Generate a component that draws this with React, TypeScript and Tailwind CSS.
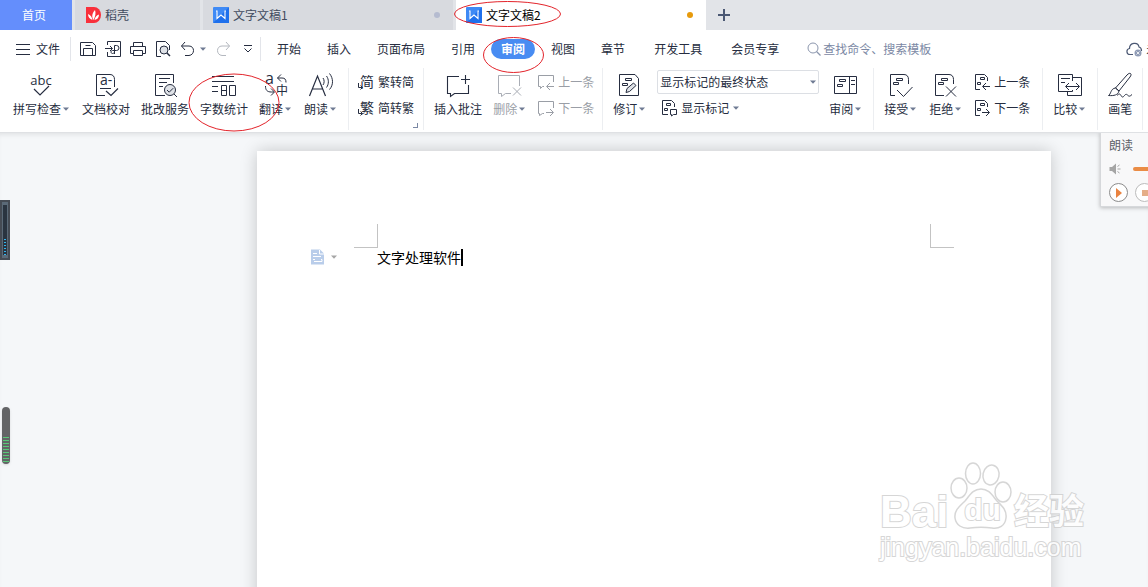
import { useState, type ReactNode } from "react";
import clsx from "clsx";

const labelClass = "flex h-4 items-center whitespace-nowrap text-xs leading-4";

function Svg({ size = 24, children, className }: { size?: number; children: ReactNode; className?: string }) {
  return (
    <svg
      width={size}
      height={size}
      viewBox={`0 0 ${size} ${size}`}
      fill="none"
      stroke="currentColor"
      className={clsx("shrink-0 overflow-visible", className)}
      aria-hidden="true"
    >
      {children}
    </svg>
  );
}

function Caret({ className = "text-[#6f7b93]" }: { className?: string }) {
  return (
    <svg width="6" height="4" viewBox="0 0 6 4" fill="currentColor" className={clsx("shrink-0", className)} aria-hidden="true">
      <path d="M0 .5h6L3 3.8z" />
    </svg>
  );
}

/* ---------- ribbon icons, 24px ---------- */

const spellIcon = (
  <Svg>
    <text x="11" y="12" textAnchor="middle" fontSize="13" fill="currentColor" stroke="none" className="font-['Open_Sans',sans-serif]">abc</text>
    <path d="M4 16l6 6L19 13" strokeWidth="1.2" />
  </Svg>
);

const proofIcon = (
  <Svg>
    <path d="M11 22.5H2.5V1.5H16c3 0 4.5 2 4.5 5V14M6 15.5h11" />
    <text x="6" y="12" fontSize="14" fill="currentColor" stroke="none" className="font-['Open_Sans',sans-serif]">a-</text>
    <path d="M12 18l5 4.5 7-7" strokeWidth="1.2" />
  </Svg>
);

const correctIcon = (
  <Svg>
    <path d="M12 22.5H2.5V1.5h18V10M6 5.5h11M6 9.5h8M6 13.5h4" />
    <circle cx="17" cy="17" r="5.5" fill="#dfe2e7" />
    <path d="M14 17l2.2 2.2 4-4M21 21l3 3" />
  </Svg>
);

const countIcon = (
  <Svg>
    <path d="M0 3.5h22M0 8.5h22M0 13.5h6M0 18.5h6M9.5 12.5h5v10h-5zM9.5 17.5h5M17.5 12.5h6v10h-6z" />
  </Svg>
);

const translateIcon = (
  <Svg>
    <text x="1" y="11" fontSize="16" fill="currentColor" stroke="none" className="font-['Open_Sans',sans-serif]">a</text>
    <text x="12" y="22" fontSize="12" fill="currentColor" stroke="none">中</text>
    <path d="M17 1.5L13.5 5l3.5 3.5M13.5 5H18c3 0 4 1.5 4 4.5M1.5 13c0 4 1.5 6 6 6H10M7 15.5l3.5 3.5L7 22.5" />
  </Svg>
);

const readIcon = (
  <Svg>
    <path d="M.5 23L8.5 3 16.5 23M3.5 16h10" strokeWidth="1.2" />
    <path d="M14 5c1.5 2 1.5 5 0 7M17.5 3c2.5 3.5 2.5 8 0 11.5M20.5.5c4 5 4 11.5 0 16" />
  </Svg>
);

const addCommentIcon = (
  <Svg>
    <path d="M13 3.5H1.5v17h3v3l4-3h14V12M19.5 2v9M15 6.5h9" strokeWidth="1.1" />
  </Svg>
);

const deleteCommentIcon = (
  <Svg>
    <path d="M13 20.5H7.5l-4 3v-3h-3v-18h21V13M15 14.5l8 8M23 14.5l-8 8" />
  </Svg>
);

const reviseIcon = (
  <Svg>
    <path d="M1.5 1.5H17l3.5 4v17h-19zM7.5 5.5h6v2h-6zM4.5 10.5h5v2h-5z" />
    <path d="M8 19.5l1-4 6.5-5.5 2.5 2.5-6.5 6z" fill="#dfe2e7" />
  </Svg>
);

const reviewPaneIcon = (
  <Svg>
    <path d="M.5 3.5h22v17H.5zM15.5 3.5v17M5.5 6.5h6v2h-6zM3.5 11.5h5v2h-5zM17 7.5h4M17 11.5h4" />
  </Svg>
);

const acceptIcon = (
  <Svg>
    <path d="M6 22.5H1.5v-21H15c3 0 4.5 2 4.5 5V11M7.5 5.5h6v2h-6zM4.5 9.5h5v2h-5z" />
    <path d="M8 17l6.5 6.5L23.5 14" />
  </Svg>
);

const rejectIcon = (
  <Svg>
    <path d="M10 22.5H1.5v-21H15c3 0 4.5 2 4.5 5V11M7.5 5.5h6v2h-6zM4.5 9.5h5v2h-5z" />
    <path d="M12 13.5l10 10M22 13.5l-10 10" />
  </Svg>
);

const compareIcon = (
  <Svg>
    <path d="M14.5 8V1.5H.5v17h14V17M14.5 4.5h9v18h-14v-4M3 5.5h9M3 9.5h4" />
    <path d="M8 13.5h13M11 10l-3.5 3.5L11 17M18 10l3.5 3.5L18 17" />
  </Svg>
);

const penIcon = (
  <Svg>
    <path d="M22.5.5c1 1 .5 2-.5 3.5L11 18l-3.5-3L19 2c1.5-1.5 2.5-2 3.5-1.5zM7.5 15L11 18c-1 4-5 5-10.5 4.5 2.5-1 2-7 7-7.500z" />
    <path d="M9 22.5c2-2 3-2 4 0s2 2 3.5 0 2.5-1 3.5 0 2 1 4-1" />
  </Svg>
);

/* ---------- ribbon icons, 16px ---------- */

function HanIcon({ char }: { char: string }) {
  return (
    <Svg size={16}>
      <text x="2" y="13" fontSize="14" fill="currentColor" stroke="none">{char}</text>
      <path d="M.5 9v4.5H4M2.5 11.5l2 2-2 2" />
    </Svg>
  );
}

const prevCommentIcon = (
  <Svg size={16}>
    <path d="M6 12.5H4.5l-2 2v-2h-2v-11h15V8M16 12.5H9M12 9l-3.5 3.5L12 16" />
  </Svg>
);

const nextCommentIcon = (
  <Svg size={16}>
    <path d="M6 13.5H4.5l-3 2v-2h-1v-12h15V8M8 12.5h7M12 9l3.5 3.5L12 16" />
  </Svg>
);

const markupIcon = (
  <Svg size={16}>
    <path d="M7 14.5H1.5V.5h9l3 3V7M5.5 3.5h4v2h-4zM3.5 8.5h3v2h-3zM9.5 9.5h6v5h-3l-2 1.5v-1.5h-1z" />
  </Svg>
);

const prevChangeIcon = (
  <Svg size={16}>
    <path d="M6 15.5H1.5V.5h9l3 3V7M6.5 3.5h4v2h-4zM3.5 8.5h3v2h-3zM16 12.5H9M12 9l-3.5 3.5L12 16" />
  </Svg>
);

const nextChangeIcon = (
  <Svg size={16}>
    <path d="M6 15.5H1.5V.5h9l3 3V7M6.5 3.5h4v2h-4zM3.5 8.5h3v2h-3zM8 12.5h7M12 9l3.5 3.5L12 16" />
  </Svg>
);

function WriterLogo() {
  return (
    <svg width="16" height="16" viewBox="0 0 16 16" className="shrink-0" aria-hidden="true">
      <rect width="16" height="16" rx="1" fill="#3f8af5" />
      <path d="M16 0v16H0z" fill="#1f70ec" />
      <path d="M3 4h1v7.500l4-3.500 4 3.500V4h1" fill="none" stroke="#fff" strokeWidth="1.1" />
    </svg>
  );
}

function BigButton({ icon, label, caret, disabled }: { icon: ReactNode; label: string; caret?: boolean; disabled?: boolean }) {
  return (
    <button type="button" className="flex shrink-0 flex-col items-center gap-1 pt-[5px]">
      <span className={clsx("flex h-6 w-6", disabled && "text-[#a9adb5]")}>{icon}</span>
      <span className={clsx(labelClass, disabled && "text-[#9a9ea6]")}>
        {label}
        {caret ? (
          <span className="flex w-[10px] justify-center">
            <Caret />
          </span>
        ) : null}
      </span>
    </button>
  );
}

function SmallButton({ icon, label, caret, disabled }: { icon: ReactNode; label: string; caret?: boolean; disabled?: boolean }) {
  return (
    <button type="button" className={clsx(labelClass, "gap-1", disabled && "text-[#9a9ea6]")}>
      {icon}
      {label}
      {caret ? <Caret /> : null}
    </button>
  );
}

function Group({ children, className }: { children: ReactNode; className?: string }) {
  return (
    <div className={clsx("relative mb-[2px] flex shrink-0 items-start border-r border-[#eceef1]", className ?? "gap-[11px] px-[10px]")}>
      {children}
    </div>
  );
}

function TabBar() {
  return (
    <div className="flex h-[30px] shrink-0 gap-[3px] overflow-hidden bg-[#e2e4e8] text-xs text-[#414b5e]">
      <button type="button" className="w-[72px] shrink-0 bg-[#648efc] pr-1 text-white">首页</button>
      <button type="button" className="flex w-[125px] shrink-0 items-center gap-1 bg-[#d8dadf] pl-[11px]">
        <svg width="15" height="16" viewBox="0 0 15 16" aria-hidden="true">
          <path d="M0 0h8a7 8 0 010 16H0z" fill="#f9303b" />
          <path d="M7.5 13C5.5 10 6 6 9 3c1 3 .5 6-1.5 10zM6.5 13C3.5 12 2 10 2 7c2.5 1 4 3 4.500 6zM8.500 13c.5-3 2-4.500 4.500-5.500 0 3-1.500 5-4.500 5.500z" fill="#fff" />
        </svg>
        稻壳
      </button>
      <button type="button" className="flex w-[250px] shrink-0 items-center gap-1 bg-[#d8dadf] pl-[10px] pr-[13px]">
        <WriterLogo />
        文字文稿1
        <span className="ml-auto h-[6px] w-[6px] rounded-full bg-[#b5bbd0]" />
      </button>
      <button type="button" className="flex w-[250px] shrink-0 items-center gap-1 bg-white pl-[10px] pr-[13px] text-black">
        <WriterLogo />
        文字文稿2
        <span className="ml-auto h-[6px] w-[6px] rounded-full bg-[#e79a0c]" />
      </button>
      <button type="button" aria-label="新建" className="shrink-0 pl-[9px] text-[#4b5873]">
        <Svg size={12}>
          <path d="M6 0v12M0 6h12" strokeWidth="2" />
        </Svg>
      </button>
    </div>
  );
}

const menus = ["开始", "插入", "页面布局", "引用", "审阅", "视图", "章节"];
const extraMenus = ["开发工具", "会员专享"];

function MenuBar() {
  const [active, setActive] = useState("审阅");

  function renderMenu(name: string) {
    return (
      <button
        key={name}
        type="button"
        onClick={() => setActive(name)}
        className={clsx(
          "h-[20px] whitespace-nowrap rounded-full px-[10px]",
          name === active && "bg-[#488cf2] font-bold text-white",
        )}
      >
        {name}
      </button>
    );
  }

  return (
    <div className="flex h-[38px] shrink-0 items-center overflow-hidden bg-white text-xs">
      <button type="button" className="ml-4 flex shrink-0 items-center gap-[6px]">
        <Svg size={14}>
          <path d="M0 2.5h14M0 7.5h14M0 12.5h14" />
        </Svg>
        文件
      </button>
      <div className="ml-[10px] flex h-6 shrink-0 items-center gap-[9px] border-x border-[#e3e5ea] pl-[9px] pr-[6px]">
        <button type="button" aria-label="保存">
          <Svg size={16}>
            <path d="M.5 1.5h12l3 3v10H.5zM3.5 14.5v-7h9v7M5.5 4.5h5" />
          </Svg>
        </button>
        <button type="button" aria-label="输出为PDF">
          <Svg size={16}>
            <path d="M2.5 4V.5h13v15h-13V11M0 7.5h7M5 5l2.5 2.5L5 10M9.5 13V4.5h2a2 2 0 010 5H7.5c-2 0-2 3 0 3s2-1.5 2-3" />
          </Svg>
        </button>
        <button type="button" aria-label="打印">
          <Svg size={16}>
            <path d="M3.5 5V1.5h9V5M3.5 12.5h-3v-7h15v7h-3M3.5 9.5h9v5h-9z" />
          </Svg>
        </button>
        <button type="button" aria-label="打印预览">
          <Svg size={16}>
            <path d="M6 15.5H1.5V.5h9l4 4V9" />
            <circle cx="9" cy="9" r="4" fill="#dfe2e7" />
            <path d="M12 12l3 3" strokeWidth="1.5" />
          </Svg>
        </button>
        <button type="button" aria-label="撤销" className="flex items-center gap-1">
          <Svg size={16}>
            <path d="M5 1L1.5 5 5 9M1.5 5H9c6 0 6 9 0 9.5H5" />
          </Svg>
          <Caret />
        </button>
        <button type="button" aria-label="恢复" className="text-[#b4b8bf]">
          <Svg size={16}>
            <path d="M11 1l3.5 4L11 9M14.5 5H7c-6 0-6 9 0 9.5h4" />
          </Svg>
        </button>
        <button type="button" aria-label="自定义快速访问工具栏" className="ml-1 mr-[2px]">
          <Svg size={8}>
            <path d="M0 .5h8M.5 3.5L4 7l3.5-3.5" />
          </Svg>
        </button>
      </div>
      <nav className="ml-[6px] flex shrink-0 items-center gap-[6px]">{menus.map(renderMenu)}</nav>
      <nav className="ml-[9px] flex shrink-0 items-center gap-[9px]">{extraMenus.map(renderMenu)}</nav>
      <label className="ml-[18px] flex w-[319px] shrink-0 items-center gap-[2px] text-[#8b96ad]">
        <Svg size={14}>
          <circle cx="6" cy="6" r="5" />
          <path d="M9.5 9.5l4 4" strokeWidth="1.3" />
        </Svg>
        <input
          type="text"
          aria-label="查找命令"
          placeholder="查找命令、搜索模板"
          className="min-w-0 flex-1 bg-transparent text-xs outline-none placeholder:text-[#7b88a4]"
        />
      </label>
      <button type="button" className="flex shrink-0 items-center gap-1">
        <Svg size={16} className="text-[#4b5873]">
          <path d="M7 13.5H4C0 13.5 0 8 3.5 7.5 3.5 1.5 12 .5 13 6c2 .5 2.5 2 2.5 4" strokeWidth="1.2" />
          <circle cx="12" cy="12" r="3.5" fill="#8f9bb5" stroke="none" />
          <path d="M10.5 10.5l3 3M13.5 10.5l-3 3" stroke="#fff" strokeWidth=".8" />
        </Svg>
        未同步
      </button>
    </div>
  );
}

function Ribbon() {
  return (
    <div className="relative z-10 flex h-16 shrink-0 overflow-hidden bg-white">
      <Group className="gap-[11px] pl-[13px] pr-[10px]">
        <BigButton icon={spellIcon} label="拼写检查" caret />
        <BigButton icon={proofIcon} label="文档校对" />
        <BigButton icon={correctIcon} label="批改服务" />
        <BigButton icon={countIcon} label="字数统计" />
        <BigButton icon={translateIcon} label="翻译" caret />
        <BigButton icon={readIcon} label="朗读" caret />
      </Group>
      <Group className="px-[9px]">
        <div className="flex flex-col gap-[10px] pt-[6px]">
          <SmallButton icon={<HanIcon char="简" />} label="繁转简" />
          <SmallButton icon={<HanIcon char="繁" />} label="简转繁" />
        </div>
        <span className="absolute bottom-[2px] right-[5px] h-[5px] w-[5px] border-b border-r border-[#7b88a4]" />
      </Group>
      <Group className="gap-[11px] pl-[10px] pr-2">
        <BigButton icon={addCommentIcon} label="插入批注" />
        <BigButton icon={deleteCommentIcon} label="删除" caret disabled />
        <div className="flex flex-col gap-[10px] pt-[6px]">
          <SmallButton icon={prevCommentIcon} label="上一条" disabled />
          <SmallButton icon={nextCommentIcon} label="下一条" disabled />
        </div>
      </Group>
      <Group className="gap-[10px] px-[10px]">
        <BigButton icon={reviseIcon} label="修订" caret />
        <div className="flex flex-col items-start gap-[6px] pt-[2px]">
          <div className="relative">
            <select
              aria-label="显示标记的最终状态"
              className="block h-6 w-[162px] appearance-none rounded-[2px] border border-[#dcdfe4] bg-white pl-[2px] text-xs outline-none"
            >
              <option>显示标记的最终状态</option>
              <option>最终状态</option>
              <option>原始状态</option>
            </select>
            <Caret className="pointer-events-none absolute right-[3px] top-[10px] text-[#6f7b93]" />
          </div>
          <div className="pl-1">
            <SmallButton icon={markupIcon} label="显示标记" caret />
          </div>
        </div>
        <BigButton icon={reviewPaneIcon} label="审阅" caret />
      </Group>
      <Group className="gap-[11px] pl-[10px] pr-3">
        <BigButton icon={acceptIcon} label="接受" caret />
        <BigButton icon={rejectIcon} label="拒绝" caret />
        <div className="flex flex-col gap-[10px] pt-[6px]">
          <SmallButton icon={prevChangeIcon} label="上一条" />
          <SmallButton icon={nextChangeIcon} label="下一条" />
        </div>
      </Group>
      <Group>
        <BigButton icon={compareIcon} label="比较" caret />
      </Group>
      <Group>
        <BigButton icon={penIcon} label="画笔" />
      </Group>
    </div>
  );
}

function ReadPanel() {
  return (
    <section className="absolute -right-[112px] -top-px flex h-[75px] w-[160px] flex-col border border-[#d6d8db] bg-[#f8f8f9] pl-2 shadow-[0_1px_4px_rgba(0,0,0,0.25)]">
      <h2 className="mt-1 text-xs leading-4 text-[#5c6068]">朗读</h2>
      <div className="mt-2 flex h-4 items-center gap-3">
        <svg width="12" height="12" viewBox="0 0 12 12" fill="#a5a5a5" stroke="#a5a5a5" aria-hidden="true">
          <path d="M.5 4H3l4-3.5v11L3 8H.5z" stroke="none" />
          <path d="M8.5 3.500l2-1.500M8.500 6h3M8.500 8.500l2 1.500" />
        </svg>
        <span className="h-1 w-[100px] rounded-full bg-[#ea8c46]" />
      </div>
      <div className="mt-[6px] flex gap-[7px]">
        <button type="button" aria-label="播放" className="flex h-[19px] w-[19px] items-center justify-center rounded-full border border-[#8c8c8c] bg-white">
          <svg width="6" height="10" viewBox="0 0 6 10" fill="#ea8340" aria-hidden="true">
            <path d="M0 0l6 5-6 5z" />
          </svg>
        </button>
        <button type="button" aria-label="停止" className="flex h-[19px] w-[19px] items-center justify-center rounded-full border border-[#bcbcbc] bg-white">
          <span className="h-[6px] w-[6px] bg-[#e5ae88]" />
        </button>
      </div>
    </section>
  );
}

const outlineClass = "text-white [-webkit-text-stroke:2px_#cdcdcd] [paint-order:stroke_fill]";

function Watermark() {
  return (
    <div className="pointer-events-none absolute bottom-[25px] right-16 flex w-[204px] flex-col font-['Liberation_Sans','Noto_Sans_CJK_SC',sans-serif] opacity-80">
      <div className="flex h-[70px] items-end justify-between">
        <span className={clsx("text-[44px] font-bold leading-[40px]", outlineClass)}>Bai</span>
        <div className="relative h-[70px] w-[62px]">
          <svg width="62" height="70" viewBox="0 0 62 70" fill="#fff" stroke="#cdcdcd" strokeWidth="1.5" aria-hidden="true">
            <ellipse cx="9" cy="26" rx="8" ry="10" />
            <ellipse cx="23" cy="11.5" rx="7.5" ry="10.5" />
            <ellipse cx="41" cy="13" rx="8" ry="10" transform="rotate(12 41 13)" />
            <ellipse cx="53" cy="30" rx="8" ry="10" />
            <path d="M31 27c8 0 11 6 16 12 5 5 10 9 9 17-1 8-7 11-14 10-8-1-14-1-22 0-8 1-14-3-15-10-1-8 5-12 10-17 5-6 8-12 16-12z" />
          </svg>
          <span className={clsx("absolute left-[14px] top-[32px] text-[30px] font-bold leading-8", outlineClass)}>du</span>
        </div>
        <span className={clsx("text-[35px] font-bold leading-[40px]", outlineClass)}>经验</span>
      </div>
      <span className={clsx("text-[25px] leading-[30px]", outlineClass)}>jingyan.baidu.com</span>
    </div>
  );
}

function Document() {
  return (
    <main className="relative flex-1 overflow-hidden border-t border-[#dfe1e4] bg-[#f5f7f9] pl-[160px] pt-[18px] shadow-[inset_0_4px_4px_-2px_rgba(0,0,0,0.08)]">
      <article className="mx-auto h-[1123px] w-[794px] bg-white pt-[73px] shadow-[0_0_16px_rgba(0,0,0,0.2)]">
        <div className="flex justify-between px-[97px]">
          <span className="h-6 w-6 border-b border-r border-[#c3c3c3]" />
          <span className="h-6 w-6 border-b border-l border-[#c3c3c3]" />
        </div>
        <div className="flex h-[18px] items-center pl-[54px]">
          <button type="button" aria-label="段落布局" className="flex w-[66px] items-center gap-[6px]">
            <svg width="14" height="16" viewBox="0 0 14 16" aria-hidden="true">
              <path d="M0 .5h9l4 4v11H0z" fill="#b9cdea" />
              <path d="M8.5 1v4h4.5M2 4.5h4M2 7.5h8M2 10.5h2M10 10.5h1M3 12.5h8v-2" fill="none" stroke="#fff" />
            </svg>
            <Caret className="text-[#a6a6a6]" />
          </button>
          <p className="text-sm leading-[18px] text-black">文字处理软件</p>
          <span className="h-[17px] w-[2px] bg-black" />
        </div>
      </article>
      <ReadPanel />
      <Watermark />
      <div className="absolute left-0 top-[67px] h-[60px] w-[10px] border-2 border-[#454b54] bg-[#5b6a78] px-px py-[3px]">
        <div className="flex h-full flex-col justify-end bg-[#2a3440] px-px">
          <span className="h-4 bg-[repeating-linear-gradient(#30b4ee_0_1px,#2a3440_1px_3px)]" />
        </div>
      </div>
      <div className="absolute left-[2px] top-[274px] flex h-[57px] w-2 flex-col justify-end rounded-full bg-[#636466] px-px pb-[2px] shadow-sm">
        <span className="h-[25px] bg-[repeating-linear-gradient(#58c878_0_1px,#636466_1px_3px)]" />
      </div>
    </main>
  );
}

/** 红圈标注：文稿标签、审阅菜单、字数统计 */
function Annotations() {
  return (
    <svg
      width="600"
      height="140"
      viewBox="0 0 600 140"
      fill="none"
      stroke="#e3242b"
      className="pointer-events-none absolute left-0 top-0 z-20"
      aria-hidden="true"
    >
      <ellipse cx="507.5" cy="14" rx="53" ry="12.5" />
      <ellipse cx="513.5" cy="55" rx="30" ry="17.5" />
      <ellipse cx="234" cy="102.5" rx="45" ry="28.5" />
    </svg>
  );
}

export default function App() {
  return (
    <div className="relative flex h-screen flex-col overflow-hidden bg-white font-['Noto_Sans_CJK_SC','Noto_Sans',sans-serif] text-[#262d40]">
      <TabBar />
      <MenuBar />
      <Ribbon />
      <Document />
      <Annotations />
    </div>
  );
}
